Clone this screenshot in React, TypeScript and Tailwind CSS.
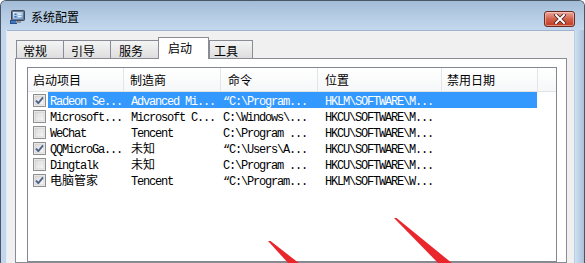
import React from "react";

type Row = { c: boolean; a: string; b: string; cmd: string; loc: string; sel?: boolean };

const rows: Row[] = [
  { c: true, a: "Radeon Se...", b: "Advanced Mi...", cmd: "“C:\\Program...", loc: "HKLM\\SOFTWARE\\M...", sel: true },
  { c: false, a: "Microsoft...", b: "Microsoft C...", cmd: "C:\\Windows\\...", loc: "HKCU\\SOFTWARE\\M..." },
  { c: false, a: "WeChat", b: "Tencent", cmd: "C:\\Program ...", loc: "HKCU\\SOFTWARE\\M..." },
  { c: true, a: "QQMicroGa...", b: "未知", cmd: "“C:\\Users\\A...", loc: "HKCU\\SOFTWARE\\M..." },
  { c: false, a: "Dingtalk", b: "未知", cmd: "C:\\Program ...", loc: "HKCU\\SOFTWARE\\M..." },
  { c: true, a: "电脑管家", b: "Tencent", cmd: "“C:\\Program...", loc: "HKLM\\SOFTWARE\\W..." },
];

const isCjk = (s: string) => /[\u4e00-\u9fff]/.test(s);

function Cell({ text }: { text: string }) {
  if (isCjk(text)) {
    return <span className="font-['Noto_Sans_CJK_SC',sans-serif] text-[12px] leading-[16px]">{text}</span>;
  }
  return (
    <span className="font-['Liberation_Mono',monospace] text-[12px] leading-[16px] tracking-[-1.2px] whitespace-pre">
      {text}
    </span>
  );
}

function CheckBox({ checked }: { checked: boolean }) {
  return (
    <svg width="13" height="13" viewBox="0 0 13 13" className="block">
      <defs>
        <linearGradient id="cbg" x1="0" y1="0" x2="1" y2="1">
          <stop offset="0" stopColor="#d9d9d9" />
          <stop offset="1" stopColor="#f7f7f7" />
        </linearGradient>
      </defs>
      <rect x="0.5" y="0.5" width="12" height="12" fill="#f4f4f4" stroke="#8f8f8f" />
      <rect x="2" y="2" width="9" height="9" fill="url(#cbg)" stroke="#c6c6c6" strokeWidth="0.6" />
      {checked && (
        <path d="M3 6.6 L5.3 9.2 L10 3.4" fill="none" stroke="#4c5f87" strokeWidth="1.8" strokeLinejoin="round" />
      )}
    </svg>
  );
}

function TitleIcon() {
  return (
    <svg width="16" height="14" viewBox="0 0 16 14" className="block">
      <defs>
        <linearGradient id="scr" x1="0" y1="0" x2="1" y2="1">
          <stop offset="0" stopColor="#e8f2fb" />
          <stop offset="1" stopColor="#5f95cf" />
        </linearGradient>
      </defs>
      <rect x="1.5" y="0.5" width="13" height="10" rx="1" fill="#6b7686" stroke="#3c4656" />
      <rect x="3" y="2" width="10" height="7" fill="url(#scr)" />
      <rect x="4.5" y="3.5" width="2" height="1.5" fill="#2f6fc0" />
      <rect x="4.5" y="6" width="2" height="1.5" fill="#2f6fc0" />
      <path d="M8 4.2h3.5M8 6.7h3.5" stroke="#ffffff" strokeWidth="1" />
      <rect x="0.5" y="10.5" width="6" height="3" fill="#3f78c4" stroke="#2a4f86" />
      <rect x="6" y="11" width="5" height="2" fill="#8a94a2" />
    </svg>
  );
}

function CloseButton() {
  return (
    <div className="w-[31px] h-[16px] rounded-[3px] border border-[#6a2b22] bg-gradient-to-b from-[#e9a99d] via-[#d2604b] to-[#c0391f] flex items-center justify-center shadow-[inset_0_0_0_1px_rgba(255,220,210,0.5)]">
      <svg width="12" height="10" viewBox="0 0 12 10" className="block">
        <path d="M2 1 L10 9 M10 1 L2 9" stroke="#4a1d16" strokeWidth="3.6" strokeLinecap="square" />
        <path d="M2 1 L10 9 M10 1 L2 9" stroke="#ffffff" strokeWidth="2" strokeLinecap="square" />
      </svg>
    </div>
  );
}

const tabs = [
  { t: "常规", w: "w-[47px]", pl: "pl-[6px]" },
  { t: "引导", w: "w-[47px]", pl: "pl-[7px]" },
  { t: "服务", w: "w-[48px]", pl: "pl-[8px]" },
  { t: "启动", w: "w-[51px]", pl: "pl-[9px]", sel: true },
  { t: "工具", w: "w-[44px]", pl: "pl-[4px]" },
];

export default function App() {
  return (
    <div className="relative w-[585px] h-[263px] overflow-hidden flex flex-col bg-[#c2d7ed] border-l border-t border-r border-[#4a5565] rounded-t-[6px] font-['Noto_Sans_CJK_SC',sans-serif] text-black">
      {/* Title bar */}
      <div className="h-[29px] flex items-center bg-gradient-to-b from-[#a3bcd6] via-[#b4cbe3] to-[#c3d8ee] shrink-0">
        <div className="ml-[9px] mt-[2px]">
          <TitleIcon />
        </div>
        <span className="ml-[5px] text-[12px] leading-[16px] mt-[3px]">系统配置</span>
        <div className="flex-1" />
        <div className="mr-[9px] mt-[6px]">
          <CloseButton />
        </div>
      </div>
      {/* Body */}
      <div className="flex flex-1 min-h-0">
        <div className="w-[5px] bg-[#c2d7ed]" />
        <div className="w-[1px] bg-[#e4eef8]" />
        <div className="flex-1 bg-[#f0f0f0] flex flex-col pt-[6px] pl-[8px] pr-[7px] border-t border-[#9fb4cc]">
          {/* Tabs */}
          <div className="flex h-[21px] pl-[1px] items-end relative z-10">
            {tabs.map((tab, i) =>
              tab.sel ? (
                <div
                  key={i}
                  className={`${tab.w} h-[22px] -mb-[1px] bg-white border border-b-0 border-[#898c95] ${tab.pl} text-[12px] leading-[18px] pt-[1px]`}
                >
                  {tab.t}
                </div>
              ) : (
                <div
                  key={i}
                  className={`${tab.w} h-[18px] bg-gradient-to-b from-[#f4f4f4] to-[#dedede] border-t border-l border-[#898c95] ${
                    i === tabs.length - 1 ? "border-r" : ""
                  } ${tab.pl} text-[12px] leading-[19px]`}
                >
                  {tab.t}
                </div>
              )
            )}
          </div>
          {/* Panel */}
          <div className="flex-1 bg-white border border-[#898c95] pt-[8px] pl-[11px] pr-[9px] flex flex-col">
            <div className="flex-1 border border-[#828790] flex flex-col">
              {/* Header */}
              <div className="h-[24px] flex border-b border-[#e3e3e3] bg-gradient-to-b from-white to-[#f6f7f8] text-[12px] leading-[23px]">
                <div className="w-[96px] pl-[5px] border-r border-[#e3e5e8]">启动项目</div>
                <div className="w-[97px] pl-[6px] border-r border-[#e3e5e8]">制造商</div>
                <div className="w-[97px] pl-[7px] border-r border-[#e3e5e8]">命令</div>
                <div className="w-[124px] pl-[7px] border-r border-[#e3e5e8]">位置</div>
                <div className="w-[96px] pl-[5px] border-r border-[#e3e5e8]">禁用日期</div>
                <div className="flex-1" />
              </div>
              {/* Rows */}
              <div className="flex flex-col text-[12px] leading-[16px]">
                {rows.map((r, i) => (
                  <div key={i} className="h-[16px] flex items-center">
                    <div className="w-[20px] h-[16px] pl-[5px] flex items-center">
                      <CheckBox checked={r.c} />
                    </div>
                    <div
                      className={`flex h-[16px] items-center w-[489px] ${
                        r.sel ? "bg-[#3399ff] text-white" : ""
                      }`}
                    >
                      <div className="w-[76px] h-[16px] pl-[2px] overflow-hidden whitespace-nowrap">
                        <Cell text={r.a} />
                      </div>
                      <div className="w-[97px] h-[16px] pl-[7px] overflow-hidden whitespace-nowrap">
                        <Cell text={r.b} />
                      </div>
                      <div className="w-[97px] h-[16px] pl-[2px] overflow-hidden whitespace-nowrap">
                        <Cell text={r.cmd} />
                      </div>
                      <div className="w-[124px] h-[16px] pl-[7px] overflow-hidden whitespace-nowrap">
                        <Cell text={r.loc} />
                      </div>
                      <div className="w-[95px]" />
                    </div>
                  </div>
                ))}
              </div>
            </div>
          </div>
        </div>
        <div className="w-[10px] bg-gradient-to-r from-[#cfe1f3] to-[#a9c1da] border-l border-[#b8cde2]" />
      </div>
      {/* Red arrows overlay */}
      <svg className="absolute left-0 top-0 pointer-events-none" width="585" height="263" viewBox="0 0 585 263">
        <polygon points="267,240 269.5,240 299,263 288,263" fill="#e8262b" />
        <polygon points="393,217 395.5,217 452,263 438,263" fill="#e8262b" />
      </svg>
    </div>
  );
}
